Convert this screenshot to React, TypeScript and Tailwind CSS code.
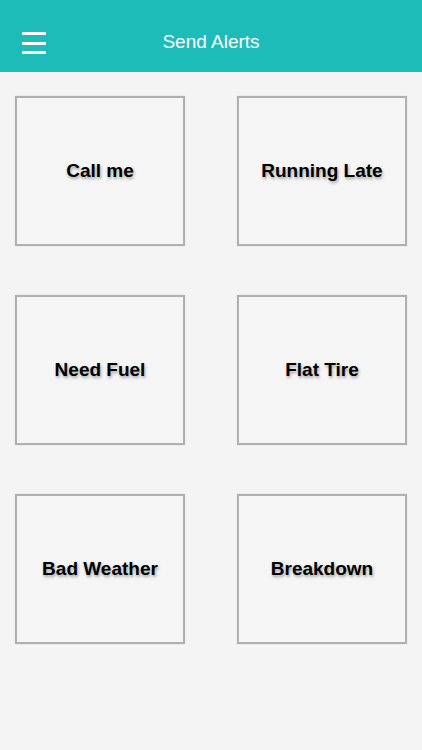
import React from 'react';

const alerts = ['Call me', 'Running Late', 'Need Fuel', 'Flat Tire', 'Bad Weather', 'Breakdown'];

export default function App() {
  return (
    <div className="w-[422px] h-[750px] bg-[#f4f4f4] font-['Liberation_Sans',Arial,sans-serif]">
      <header className="h-[72px] bg-[#1dbcb9] flex items-center relative">
        <button className="absolute left-[22px] top-[32px] w-[24px] h-[22px] flex flex-col justify-between">
          <span className="block h-[3px] w-full bg-white" />
          <span className="block h-[3px] w-full bg-white" />
          <span className="block h-[3px] w-full bg-white" />
        </button>
        <h1 className="w-full text-center text-white text-[19px] pt-[12px]">Send Alerts</h1>
      </header>

      <div className="grid grid-cols-[170px_170px] gap-x-[52px] gap-y-[49px] pl-[15px] pt-[24px]">
        {alerts.map((label) => (
          <div
            key={label}
            className="h-[150px] border-2 border-[#b0b0b0] bg-[#f5f5f5] shadow-[0_0_1px_rgba(0,0,0,0.2)] flex items-center justify-center"
          >
            <span className="text-[19px] font-bold text-black [text-shadow:1px_2px_3px_rgba(0,0,0,0.35)]">
              {label}
            </span>
          </div>
        ))}
      </div>
    </div>
  );
}
